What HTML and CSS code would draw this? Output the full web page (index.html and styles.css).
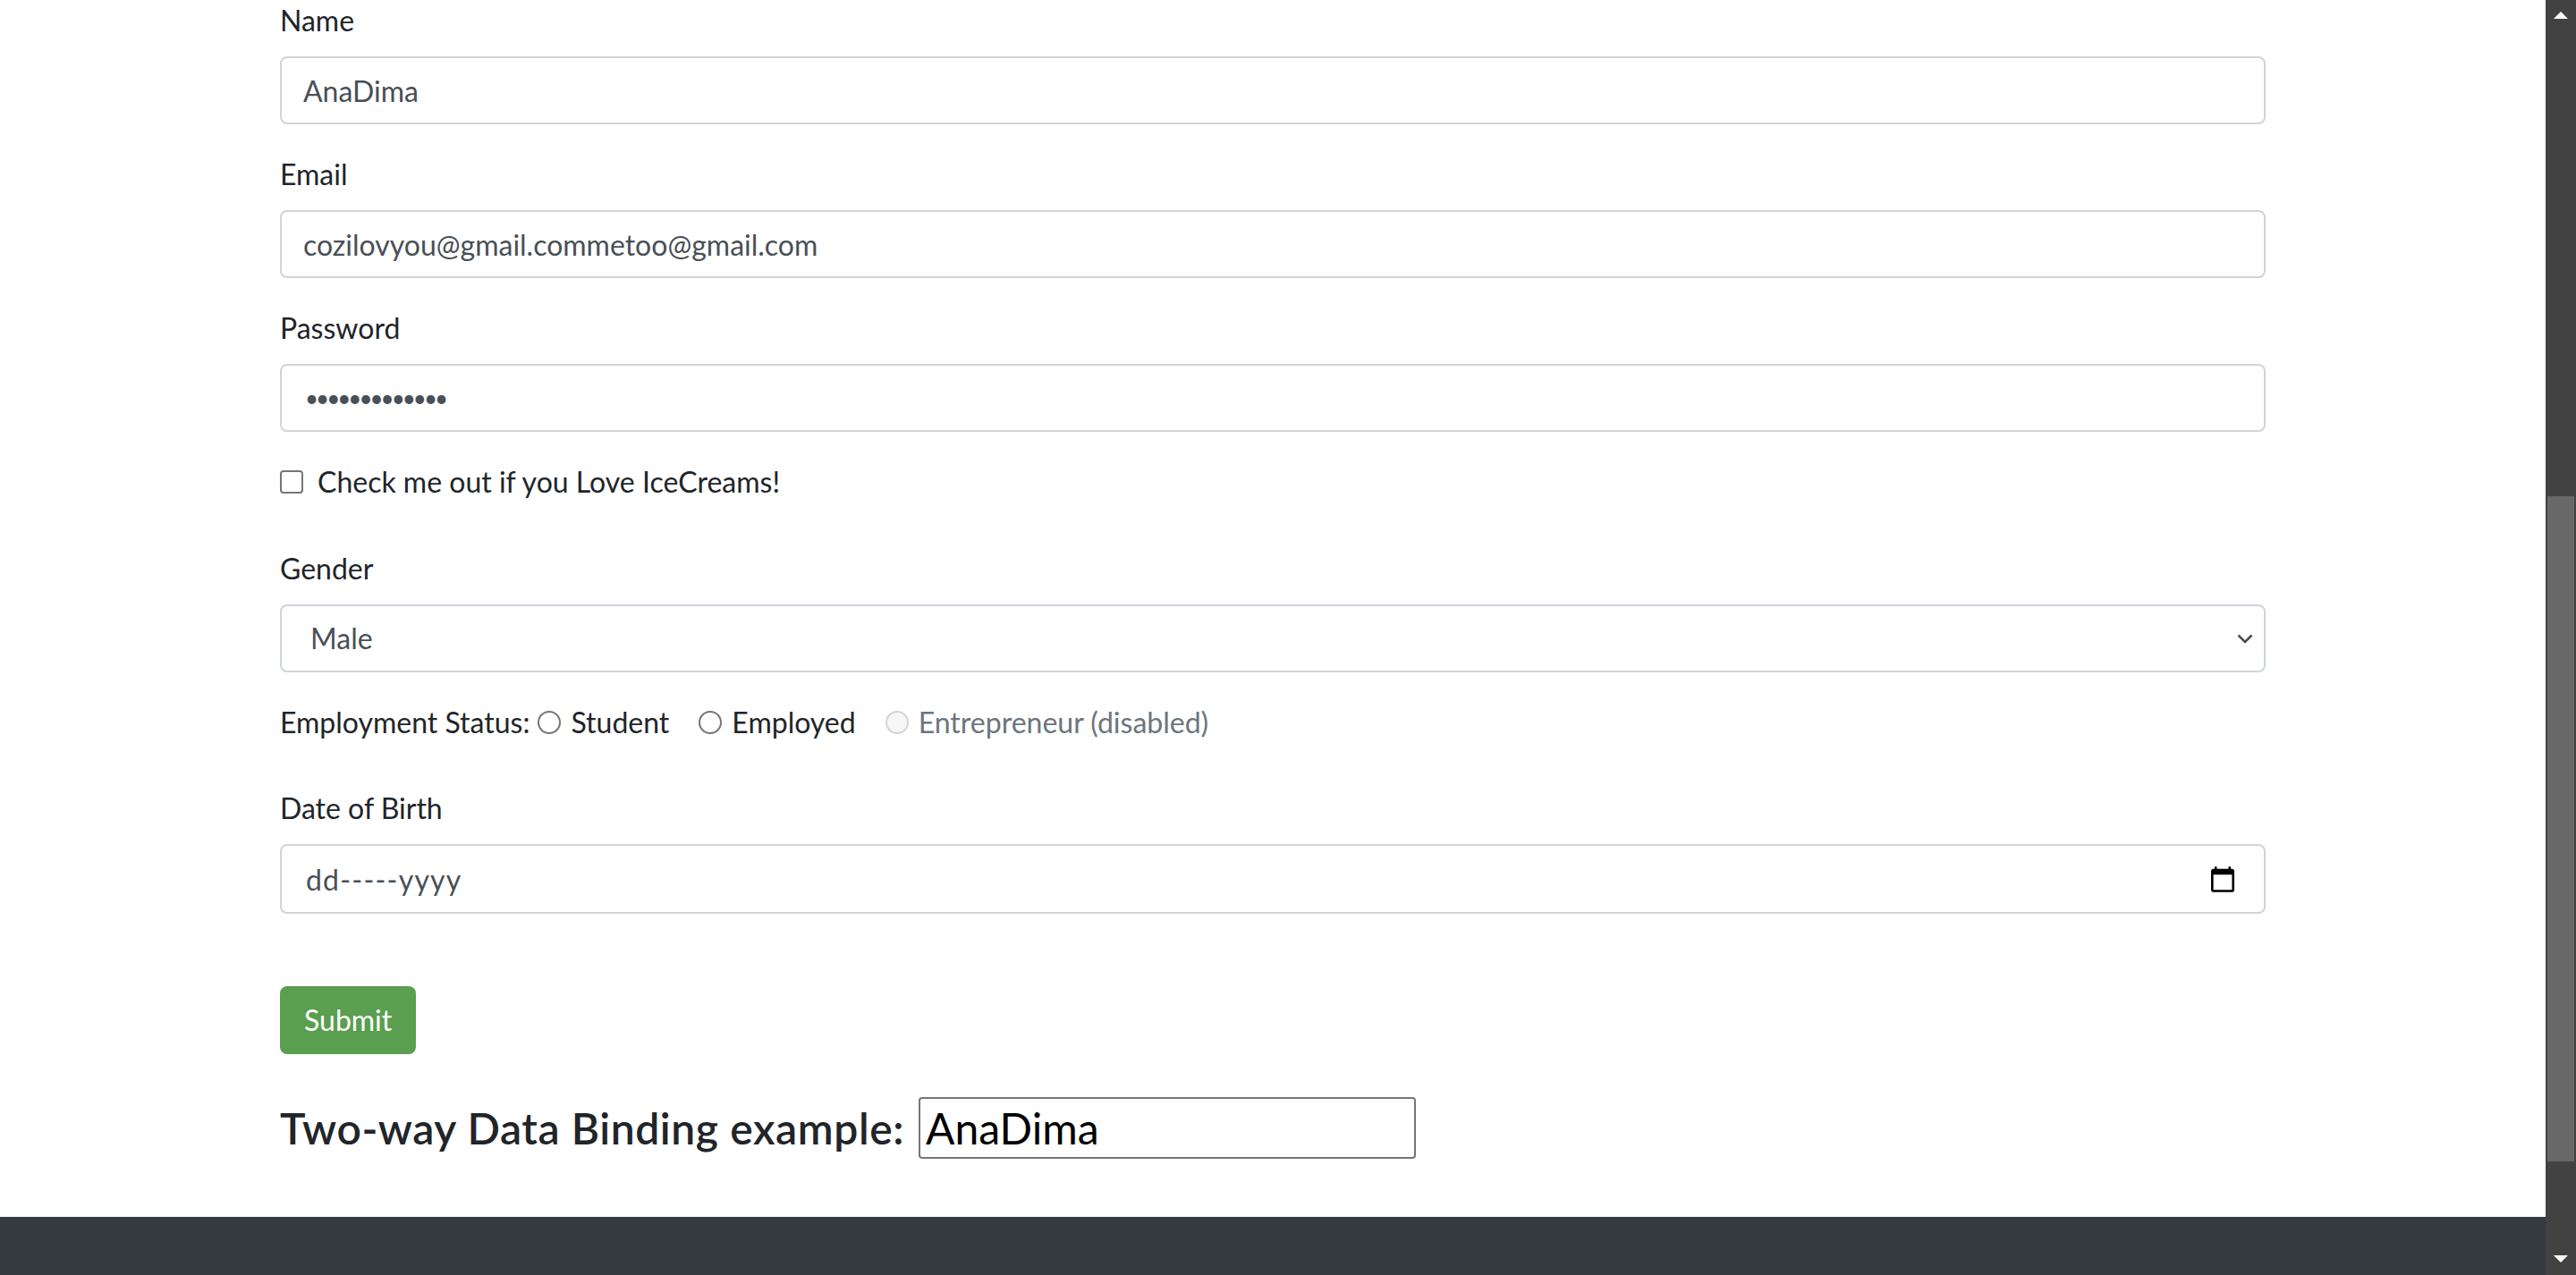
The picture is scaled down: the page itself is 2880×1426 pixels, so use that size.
FILE: index.html
```html
<!DOCTYPE html>
<html lang="en">
<head>
<meta charset="utf-8">
<title>Form</title>
<link rel="stylesheet" href="styles.css">
</head>
<body>
<div class="page">
  <main class="main">
    <div class="container">
      <form class="form">
        <div class="form-group">
          <label class="label" for="name">Name</label>
          <input class="form-control" id="name" type="text" value="AnaDima">
        </div>
        <div class="form-group">
          <label class="label" for="email">Email</label>
          <input class="form-control" id="email" type="text" value="cozilovyou@gmail.commetoo@gmail.com">
        </div>
        <div class="form-group">
          <label class="label" for="password">Password</label>
          <input class="form-control password" id="password" type="password" value="icecreamloves">
        </div>
        <div class="form-check">
          <input class="check" type="checkbox" id="ice">
          <label class="check-label" for="ice">Check me out if you Love IceCreams!</label>
        </div>
        <div class="form-group">
          <label class="label">Gender</label>
          <div class="form-control select">
            <span class="select-value">Male</span>
            <svg class="chevron" width="18" height="11" viewBox="0 0 18 11"><path d="M1.5 1.5 L9 9 L16.5 1.5" fill="none" stroke="#4a4d52" stroke-width="2.6"/></svg>
          </div>
        </div>
        <div class="form-group radio-group">
          <span class="radio-title">Employment Status:</span>
          <label class="radio-item"><input class="radio" type="radio" name="emp">Student</label>
          <label class="radio-item"><input class="radio" type="radio" name="emp">Employed</label>
          <label class="radio-item disabled"><input class="radio" type="radio" name="emp" disabled>Entrepreneur (disabled)</label>
        </div>
        <div class="form-group form-group-date">
          <label class="label">Date of Birth</label>
          <div class="form-control date">
            <span class="date-value">dd-----yyyy</span>
            <svg class="calendar" width="26" height="29" viewBox="2 1 20 22"><path d="M20 3h-1V1h-2v2H7V1H5v2H4c-1.1 0-2 .9-2 2v16c0 1.1.9 2 2 2h16c1.1 0 2-.9 2-2V5c0-1.1-.9-2-2-2zm0 18H4V8h16v13z" fill="#000"/></svg>
          </div>
        </div>
        <button class="btn-submit" type="button">Submit</button>
        <div class="binding">
          <h4 class="binding-title">Two-way Data Binding example:</h4>
          <input class="binding-input" type="text" value="AnaDima">
        </div>
      </form>
    </div>
    <footer class="footer"></footer>
  </main>
  <div class="scrollbar">
    <span class="arrow-up"></span>
    <span class="thumb"></span>
    <span class="arrow-down"></span>
  </div>
</div>
</body>
</html>
```

FILE: styles.css
```css
* { box-sizing: border-box; }
html, body { margin: 0; padding: 0; }
body {
  font-family: Lato, "Open Sans", sans-serif;
  font-size: 32px;
  line-height: 1.5;
  color: #212529;
  background: #fff;
  overflow: hidden;
}
.page { display: flex; height: 1426px; }
.main { flex: 1; min-width: 0; display: flex; flex-direction: column; }
.container { width: 2220px; margin: -1px auto 0; }
.form { margin: 0; }
.form-group { margin-bottom: 32px; }
.label { display: block; margin-bottom: 16px; }
.form-control {
  display: block;
  width: 100%;
  height: 76px;
  margin: 0;
  padding: 12px 24px;
  font: inherit;
  color: #495057;
  background: #fff;
  border: 2px solid #ced4da;
  border-radius: 8px;
  outline: none;
}
.password { font-size: 26px; letter-spacing: -3px; padding-left: 26px; }
.form-check {
  display: flex;
  align-items: center;
  height: 48px;
  margin-bottom: 49px;
}
.check {
  appearance: none;
  -webkit-appearance: none;
  width: 26px;
  height: 26px;
  margin: 0 16px 0 0;
  border: 2px solid #767676;
  border-radius: 4px;
  background: #fff;
  flex: none;
}
.select { display: flex; align-items: center; justify-content: space-between; padding-left: 32px; padding-right: 12px; }
.chevron { display: block; }
.radio-group { display: flex; align-items: center; height: 48px; margin-bottom: 48px; }
.radio-title { margin-right: 9px; }
.radio-item { display: flex; align-items: center; margin-right: 33px; }
.radio {
  appearance: none;
  -webkit-appearance: none;
  width: 26px;
  height: 26px;
  margin: 0 11px 0 0;
  border: 2px solid #767676;
  border-radius: 50%;
  background: #fff;
  flex: none;
}
.radio-item.disabled { color: #6c757d; }
.radio-item.disabled .radio { border-color: #d4d4d4; background: #f7f7f7; }
.form-group-date { margin-bottom: 81px; }
.date { height: 78px; display: flex; align-items: center; justify-content: space-between; padding-left: 27px; padding-right: 33px; }
.date-value { letter-spacing: 1.2px; padding-top: 2px; }
.calendar { display: block; }
.btn-submit {
  display: block;
  height: 76px;
  margin: 0;
  padding: 0 25px;
  font: inherit;
  color: #fff;
  background: #5a9f4f;
  border: 2px solid #5a9f4f;
  border-radius: 8px;
}
.binding { display: flex; align-items: center; gap: 16px; margin-top: 48px; }
.binding-title { margin: 0; font-size: 48px; line-height: 1.2; font-weight: 600; letter-spacing: 0.6px; color: #212529; }
.binding-input {
  width: 556px;
  height: 69px;
  margin: 0;
  padding: 2px 6px;
  font: 400 48px/1.2 Lato, "Open Sans", sans-serif;
  color: #000;
  border: 2px solid #767676;
  border-radius: 4px;
  outline: none;
}
.footer { margin-top: auto; height: 65px; background: #343a40; }
.scrollbar {
  width: 34px;
  flex: none;
  background: #424242;
  display: flex;
  flex-direction: column;
  align-items: center;
}
.arrow-up {
  margin-top: 13px;
  width: 0; height: 0;
  border-left: 8.5px solid transparent;
  border-right: 8.5px solid transparent;
  border-bottom: 8px solid #fff;
}
.thumb { margin-top: 534px; width: 30px; height: 744px; background: #686868; }
.arrow-down {
  margin-top: auto;
  margin-bottom: 14px;
  width: 0; height: 0;
  border-left: 8.5px solid transparent;
  border-right: 8.5px solid transparent;
  border-top: 8px solid #fff;
}
```
